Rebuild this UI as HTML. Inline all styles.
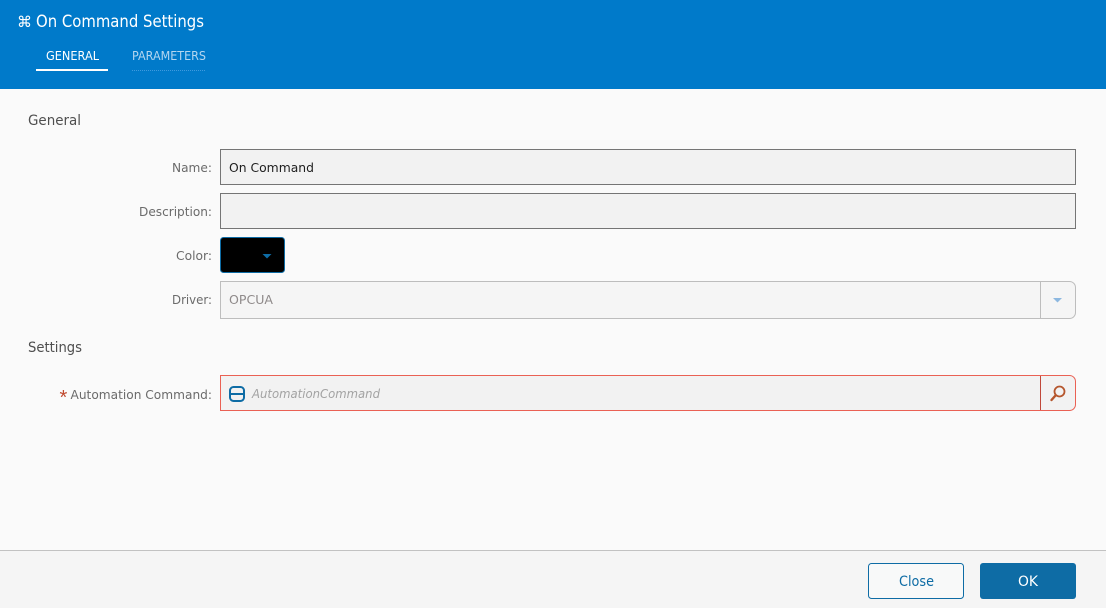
<!DOCTYPE html>
<html><head><meta charset="utf-8"><style>
html,body{margin:0;padding:0;width:1106px;height:608px;overflow:hidden;background:#fafafa}
svg{display:block}
text{font-family:"DejaVu Sans","Liberation Sans",sans-serif;font-size:12.6px;fill:#5f6368}
.s{font-family:"Liberation Sans",sans-serif}
</style></head><body>
<svg width="1106" height="608" viewBox="0 0 1106 608" xmlns="http://www.w3.org/2000/svg">
<rect width="1106" height="608" fill="#fafafa"/>
<rect width="1106" height="89" fill="#007aca"/>
<text x="17" y="27" style="font-size:15px;fill:#fff" textLength="15" lengthAdjust="spacingAndGlyphs">⌘</text>
<text x="36" y="27" style="font-size:16.500px;fill:#fff" textLength="168" lengthAdjust="spacingAndGlyphs">On Command Settings</text>
<text x="46" y="60" style="font-size:12.300px;fill:#fff" textLength="53" lengthAdjust="spacingAndGlyphs">GENERAL</text>
<rect x="36" y="69" width="72" height="2" fill="#fff"/>
<text x="132" y="60" style="font-size:12.300px;fill:#b4d6f0" textLength="74" lengthAdjust="spacingAndGlyphs">PARAMETERS</text>
<line x1="132" x2="206" y1="70.500" y2="70.500" stroke="#3f9ade" stroke-width="1" stroke-dasharray="1 1"/>

<text x="28" y="125" style="font-size:14px;fill:#4f4f4f" textLength="53" lengthAdjust="spacingAndGlyphs">General</text>
<text x="172" y="172" style="fill:#6b6b6b" textLength="40" lengthAdjust="spacingAndGlyphs">Name:</text>
<rect x="220.500" y="149.500" width="855" height="35" fill="#f2f2f2" stroke="#757575"/>
<text x="229" y="172" style="fill:#1f1f1f" textLength="85" lengthAdjust="spacingAndGlyphs">On Command</text>
<text x="139" y="216" style="fill:#6b6b6b" textLength="73" lengthAdjust="spacingAndGlyphs">Description:</text>
<rect x="220.500" y="193.500" width="855" height="35" fill="#f2f2f2" stroke="#757575"/>
<text x="176" y="260" style="fill:#6b6b6b" textLength="36" lengthAdjust="spacingAndGlyphs">Color:</text>
<rect x="220.500" y="237.500" width="64" height="35" rx="3" fill="#000" stroke="#0e6ca5"/>
<path d="M262.500 254h9l-4.500 4.500z" fill="#0e6ca5"/>
<text x="172" y="304" style="fill:#6b6b6b" textLength="40" lengthAdjust="spacingAndGlyphs">Driver:</text>
<path d="M220.500 281.500H1069.500a6 6 0 0 1 6 6V312.500a6 6 0 0 1-6 6H220.500z" fill="#f5f5f5" stroke="#bdbdbd"/>
<line x1="1040.500" x2="1040.500" y1="282" y2="318" stroke="#bdbdbd"/>
<text x="229" y="304" style="fill:#8f8a8a" textLength="44" lengthAdjust="spacingAndGlyphs">OPCUA</text>
<path d="M1053 298h9l-4.500 4.500z" fill="#8db8e0"/>

<text x="28" y="352" style="font-size:14px;fill:#4f4f4f" textLength="54" lengthAdjust="spacingAndGlyphs">Settings</text>
<text x="59.500" y="404" class="s" style="font-size:20px;fill:#c0492f">*</text>
<text x="70.500" y="399" style="fill:#6b6b6b" textLength="141.500" lengthAdjust="spacingAndGlyphs">Automation Command:</text>
<path d="M220.500 375.500H1069.500a6 6 0 0 1 6 6V404.500a6 6 0 0 1-6 6H220.500z" fill="#f2f2f2" stroke="#ea6154"/>
<line x1="1040.500" x2="1040.500" y1="376" y2="410" stroke="#c0483a"/>
<rect x="230" y="387" width="14" height="14" rx="3.500" fill="none" stroke="#0e6ca5" stroke-width="2"/>
<line x1="230" x2="244" y1="394" y2="394" stroke="#0e6ca5" stroke-width="2"/>
<text x="252" y="398" style="font-size:12.500px;font-style:italic;fill:#a3a3a3" textLength="128" lengthAdjust="spacingAndGlyphs">AutomationCommand</text>
<circle cx="1059.500" cy="391.500" r="5" fill="none" stroke="#b5562d" stroke-width="1.800"/>
<line x1="1055.500" y1="395.500" x2="1051.500" y2="400" stroke="#b5562d" stroke-width="2.400" stroke-linecap="round"/>

<rect y="550" width="1106" height="58" fill="#f5f5f5"/>
<rect y="550" width="1106" height="1" fill="#c2c2c2"/>
<rect x="868.500" y="563.500" width="95" height="35" rx="3" fill="#f8f9f9" stroke="#0e6ca5"/>
<text x="899" y="586" style="font-size:14px;fill:#0e6ca5" textLength="35" lengthAdjust="spacingAndGlyphs">Close</text>
<rect x="980" y="563" width="96" height="36" rx="3" fill="#0e6ca5"/>
<text x="1018" y="586" style="font-size:14px;fill:#fff" textLength="20" lengthAdjust="spacingAndGlyphs">OK</text>
</svg>
</body></html>
